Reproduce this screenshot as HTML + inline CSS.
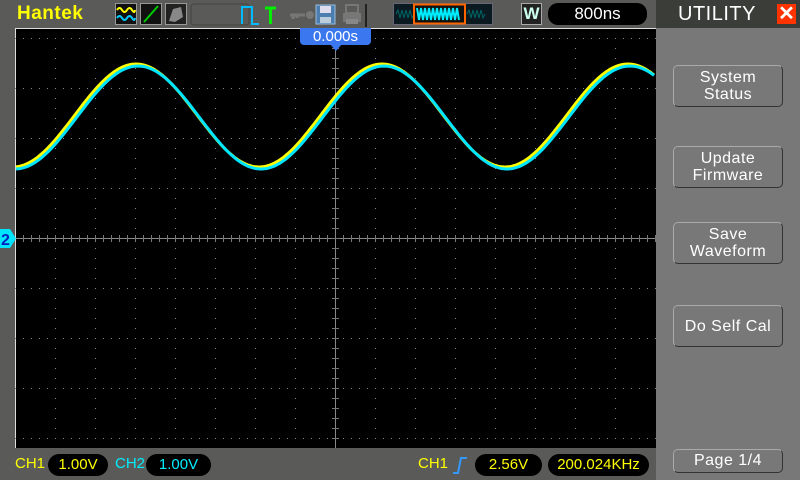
<!DOCTYPE html>
<html><head><meta charset="utf-8"><style>
*{margin:0;padding:0;box-sizing:border-box}
body{width:800px;height:480px;background:#5a5b58;position:relative;overflow:hidden;font-family:"Liberation Sans",sans-serif}
.abs{position:absolute}
.btn{position:absolute;left:673px;width:110px;height:42px;border:1px solid #aaa;border-right-color:#333;border-bottom-color:#333;border-radius:5px;color:#fff;font-size:16px;text-align:center;line-height:17px;display:flex;align-items:center;justify-content:center;letter-spacing:0.5px}
.pill{position:absolute;top:454px;height:22px;background:#000;border-radius:11px;font-size:15px;line-height:22px;text-align:center}
</style></head><body>
<!-- right panel -->
<div class="abs" style="left:656px;top:0;width:144px;height:28px;background:#3b3d39"></div>
<div class="abs" style="left:656px;top:28px;width:144px;height:452px;background:#787878"></div>
<div class="abs" style="left:678px;top:3px;color:#fff;font-size:20px;letter-spacing:0.5px">UTILITY</div>
<div class="abs" style="left:777px;top:4px;width:19px;height:20px;background:#ff3300;color:#fff;font-size:20px;line-height:20px;text-align:center;font-weight:bold">✕</div>
<div class="btn" style="top:65px">System<br>Status</div>
<div class="btn" style="top:146px">Update<br>Firmware</div>
<div class="btn" style="top:222px">Save<br>Waveform</div>
<div class="btn" style="top:305px">Do Self Cal</div>
<div class="btn" style="top:449px;height:24px;line-height:20px">Page 1/4</div>
<svg class="abs" style="left:641px;top:103px" width="15" height="16"><polygon points="0,8 15,0 15,16" fill="#ffee00"/></svg>
<!-- top bar -->
<div class="abs" style="left:17px;top:3px;color:#ffff00;font-size:19px;font-weight:bold;letter-spacing:0.5px">Hantek</div>
<svg class="abs" style="left:115px;top:3px" width="280" height="24">
<rect x="0.5" y="0.5" width="21" height="21" fill="#111" stroke="#999"/>
<path d="M2 7 q2.5-4 5 0 t5 0 t5 0 t3 0" stroke="#ff0" stroke-width="2" fill="none"/>
<path d="M2 15 q2.5-4 5 0 t5 0 t5 0 t3 0" stroke="#0cf" stroke-width="2" fill="none"/>
<rect x="25.5" y="0.5" width="21" height="21" fill="#111" stroke="#999"/>
<line x1="29" y1="19" x2="43" y2="3" stroke="#0c0" stroke-width="2"/>
<rect x="50.5" y="0.5" width="21" height="21" fill="#222" stroke="#999"/>
<path d="M54 18 L58 6 L66 4 L68 14 L60 19Z" fill="#888"/>
<rect x="76" y="1" width="58" height="21" rx="3" fill="none" stroke="#444"/>
<path d="M127 21 V4 H137 V21 H144" stroke="#0bf" stroke-width="2" fill="none"/>
<path d="M150 5 H161 M155.5 5 V21" stroke="#0e0" stroke-width="3" fill="none"/>
<path d="M175 12 H190 M178 12 V16 M182 12 V15" stroke="#777" stroke-width="3" fill="none"/><circle cx="195" cy="12" r="4" fill="#777"/>
<rect x="201" y="2" width="19" height="19" fill="#4c7fb0" stroke="#9bd" stroke-width="1"/><rect x="205" y="3" width="11" height="7" fill="#dde"/><rect x="205" y="14" width="11" height="6" fill="#bcd"/>
<rect x="228" y="10" width="18" height="9" fill="#777"/><rect x="231" y="2" width="12" height="8" fill="none" stroke="#777" stroke-width="2"/><rect x="231" y="16" width="12" height="5" fill="#888"/>
<line x1="251" y1="1" x2="251" y2="24" stroke="#222" stroke-width="2"/>
</svg>
<svg class="abs" style="left:393px;top:3px" width="100" height="22">
<rect x="0.5" y="0.5" width="99" height="21" fill="#0a1a20" stroke="#667"/>
<path d="M3 11 l2-4 2 8 2-8 2 8 2-8 2 8 2-8 2 8 2-4 M74 11 l2-4 2 8 2-8 2 8 2-8 2 8 2-8 2 8 2-4" stroke="#066" stroke-width="1" fill="none"/>
<rect x="21" y="1.5" width="51" height="19" fill="#111" stroke="#f60" stroke-width="2"/>
<path d="M24 5 l2 12 2-12 2 12 2-12 2 12 2-12 2 12 2-12 2 12 2-12 2 12 2-12 2 12 2-12 2 12 2-12 2 12 2-12 2 12 2-12 2 12" stroke="#0ef" stroke-width="2" fill="none"/>
</svg>
<div class="abs" style="left:521px;top:3px;width:21px;height:22px;background:#222;border:1px solid #aaa;color:#cfe;font-weight:bold;font-size:17px;text-align:center;line-height:20px">W</div>
<div class="abs" style="left:548px;top:3px;width:99px;height:22px;background:#000;border-radius:10px;color:#fff;font-size:17px;text-align:center;line-height:22px">800ns</div>
<!-- screen -->
<div class="abs" style="left:15px;top:28px;width:641px;height:420px;background:#000;border-left:1px solid #ddd;border-top:1px solid #ddd"></div>
<svg class="abs" id="scr" style="left:0;top:0" width="656" height="448"></svg>
<div class="abs" style="left:300px;top:28px;width:71px;height:17px;background:#3b78f0;border-radius:0 0 4px 4px;color:#fff;font-size:15px;line-height:17px;text-align:center">0.000s</div>
<svg class="abs" style="left:330px;top:44px" width="12" height="7"><polygon points="0,0 12,0 6,7" fill="#3b78f0"/></svg>
<svg class="abs" style="left:0;top:229px" width="16" height="19"><polygon points="0,0 10,0 16,9.5 10,19 0,19" fill="#00e5ff"/><text x="1" y="16" font-family="Liberation Sans" font-weight="bold" font-size="16" fill="#0020c0">2</text></svg>
<!-- bottom -->
<div class="abs" style="left:15px;top:455px;color:#ff0;font-size:15px">CH1</div>
<div class="pill" style="left:48px;width:60px;color:#ff0">1.00V</div>
<div class="abs" style="left:115px;top:455px;color:#0ef;font-size:15px">CH2</div>
<div class="pill" style="left:146px;width:65px;color:#0ef">1.00V</div>
<div class="abs" style="left:418px;top:455px;color:#ff0;font-size:15px">CH1</div>
<svg class="abs" style="left:452px;top:455px" width="16" height="20"><path d="M1 18 H6 L9 3 H15" stroke="#39f" stroke-width="2" fill="none"/></svg>
<div class="pill" style="left:475px;width:67px;color:#ff0">2.56V</div>
<div class="pill" style="left:548px;width:101px;color:#ff0">200.024KHz</div>
<script>
var s='',ns='http://www.w3.org/2000/svg';
// dots
for(var gy=38;gy<=438;gy+=50){for(var x=15;x<=655;x+=8){if(gy!=238)s+='<rect x="'+x+'" y="'+gy+'" width="1" height="1" fill="#888"/>';}}
for(var gx=55;gx<655;gx+=40){if(gx==335)continue;for(var y=38;y<448;y+=10){s+='<rect x="'+gx+'" y="'+y+'" width="1" height="1" fill="#888"/>';}}
s+='<line x1="16" y1="238.5" x2="656" y2="238.5" stroke="#888"/>';
for(var x=23;x<656;x+=8)s+='<line x1="'+(x+.5)+'" y1="235" x2="'+(x+.5)+'" y2="242" stroke="#777"/>';
s+='<line x1="335.5" y1="29" x2="335.5" y2="448" stroke="#888"/>';
for(var y=48;y<448;y+=10)s+='<line x1="332" y1="'+(y+.5)+'" x2="339" y2="'+(y+.5)+'" stroke="#777"/>';
function wave(dx,dy,c){var p='M';for(var x=16;x<=654;x+=2){var y=116.5-51.5*Math.cos(2*Math.PI*(x-137-dx)/246)+dy;p+=x+' '+y.toFixed(1)+' ';}return '<path d="'+p+'" stroke="'+c+'" stroke-width="3" fill="none"/>';}
s+=wave(-1,-1,'#ffff00')+wave(1,1,'#00e5ff');
document.getElementById('scr').innerHTML=s;
</script>
</body></html>
